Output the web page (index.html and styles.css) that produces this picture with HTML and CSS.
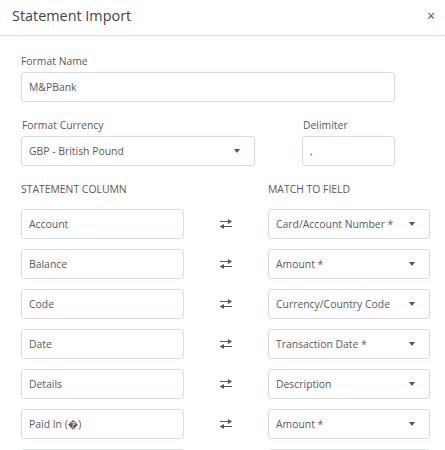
FILE: index.html
```html
<html>
 <head>
   <meta charset="utf-8">
   <link rel="stylesheet" href="styles.css">
 </head>
 <body>
  <div class="modal">
    <div class="modal-header">
      <span class="modal-title">Statement Import</span>
      <span class="close">&times;</span>
    </div>

    <div class="modal-body">
      <div class="field">
        <label>Format Name</label>
        <div class="input wide">M&amp;PBank</div>
      </div>

      <div class="field-row">
        <div class="field">
          <label>Format Currency</label>
          <div class="input select currency">GBP - British Pound <i class="caret"></i></div>
        </div>
        <div class="field">
          <label>Delimiter</label>
          <div class="input delim">,</div>
        </div>
      </div>

      <div class="map-head">
        <span>STATEMENT COLUMN</span>
        <span>MATCH TO FIELD</span>
      </div>

      <div class="map-list">
        <div class="map-row">
          <div class="input">Account</div>
          <svg class="swap" viewBox="0 0 12 10"><path d="M0 2.5h8M0 7.5h12" /><polygon points="8,0 12,2.5 8,5" /><polygon points="4,5 0,7.5 4,10" /></svg>
          <div class="input select">Card/Account Number * <i class="caret"></i></div>
        </div>
        <div class="map-row">
          <div class="input">Balance</div>
          <svg class="swap" viewBox="0 0 12 10"><path d="M0 2.5h8M0 7.5h12" /><polygon points="8,0 12,2.5 8,5" /><polygon points="4,5 0,7.5 4,10" /></svg>
          <div class="input select">Amount * <i class="caret"></i></div>
        </div>
        <div class="map-row">
          <div class="input">Code</div>
          <svg class="swap" viewBox="0 0 12 10"><path d="M0 2.5h8M0 7.5h12" /><polygon points="8,0 12,2.5 8,5" /><polygon points="4,5 0,7.5 4,10" /></svg>
          <div class="input select">Currency/Country Code <i class="caret"></i></div>
        </div>
        <div class="map-row">
          <div class="input">Date</div>
          <svg class="swap" viewBox="0 0 12 10"><path d="M0 2.5h8M0 7.5h12" /><polygon points="8,0 12,2.5 8,5" /><polygon points="4,5 0,7.5 4,10" /></svg>
          <div class="input select">Transaction Date * <i class="caret"></i></div>
        </div>
        <div class="map-row">
          <div class="input">Details</div>
          <svg class="swap" viewBox="0 0 12 10"><path d="M0 2.5h8M0 7.5h12" /><polygon points="8,0 12,2.5 8,5" /><polygon points="4,5 0,7.5 4,10" /></svg>
          <div class="input select">Description <i class="caret"></i></div>
        </div>
        <div class="map-row">
          <div class="input">Paid In (&#xFFFD;)</div>
          <svg class="swap" viewBox="0 0 12 10"><path d="M0 2.5h8M0 7.5h12" /><polygon points="8,0 12,2.5 8,5" /><polygon points="4,5 0,7.5 4,10" /></svg>
          <div class="input select">Amount * <i class="caret"></i></div>
        </div>
        <!-- next mapping row, scrolled below the fold -->
        <div class="map-row">
          <div class="input"></div>
          <span></span>
          <div class="input"></div>
        </div>
      </div>
    </div>
  </div>
 </body>
</html>
```

FILE: styles.css
```css
body {
  margin: 0;
  background: #fff;
  font-family: "Open Sans", "DejaVu Sans", sans-serif;
  color: #5a5a5a;
  font-size: 10.4px;
}

.modal-header {
  height: 35px;
  border-bottom: 1px solid #d5dce8;
  display: flex;
  align-items: center;
  justify-content: space-between;
  padding: 0 10px 5px 12px;
  box-sizing: border-box;
  height: 36px;
}
.modal-title {
  font-size: 14.4px;
  color: #444;
}
.close {
  font-size: 14px;
  color: #555;
}

.modal-body {
  padding: 17px 0 0 21px;
}

label {
  display: block;
  line-height: 17px;
  margin-bottom: 2px;
}

.field {
  margin-bottom: 15px;
}

.input {
  box-sizing: border-box;
  height: 30px;
  border: 1px solid #d6dce6;
  border-radius: 3px;
  padding: 0 7px;
  display: flex;
  align-items: center;
  line-height: 17px;
  white-space: nowrap;
}
.wide { width: 374px; }
.currency { width: 234px; }
.delim { width: 93px; }

.select {
  justify-content: space-between;
  padding-right: 14px;
}
.caret {
  width: 0;
  height: 0;
  border-left: 3.5px solid transparent;
  border-right: 3.5px solid transparent;
  border-top: 4px solid #555;
}

.field-row {
  display: flex;
  gap: 47px;
}
.field-row label { padding-left: 1px; }

.map-head {
  display: grid;
  grid-template-columns: 247px 162px;
  line-height: 17px;
  margin-bottom: 11px;
}

.map-list {
  display: flex;
  flex-direction: column;
  gap: 10px;
}
.map-row {
  display: grid;
  grid-template-columns: 163px 84px 162px;
  align-items: center;
}
.swap {
  width: 12px;
  height: 10px;
  justify-self: center;
  fill: #555;
  stroke: #555;
  stroke-width: 1.2;
}
.swap polygon { stroke: none; }
```
